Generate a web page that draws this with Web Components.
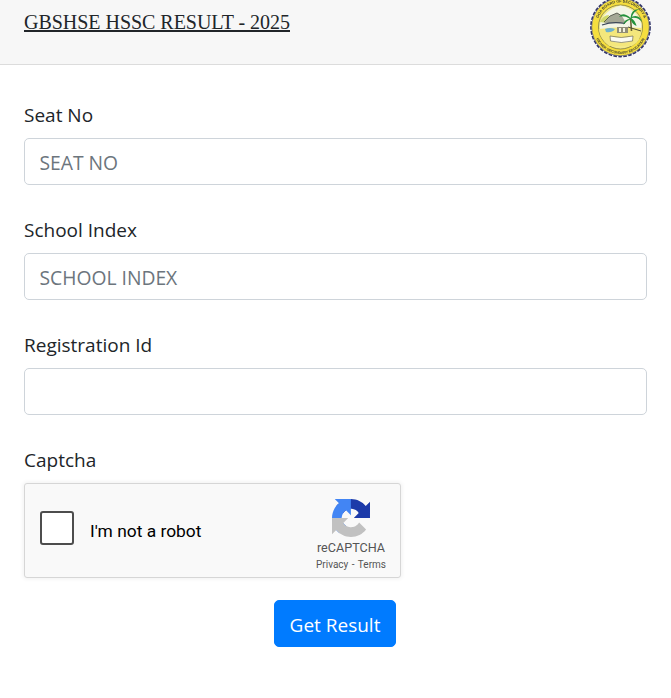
<!DOCTYPE html>
<html lang="en">
<head>
<meta charset="utf-8">
<title>GBSHSE HSSC Result</title>
<style>
    html, body { margin: 0; background: #fff; }
    body { font-family: "Open Sans", "Noto Sans", sans-serif; color: #212529; }
</style>
</head>
<body>
<result-header heading="GBSHSE HSSC RESULT - 2025"></result-header>
<result-form>
    <form-field label="Seat No" placeholder="SEAT NO"></form-field>
    <form-field label="School Index" placeholder="SCHOOL INDEX"></form-field>
    <form-field label="Registration Id"></form-field>
    <captcha-field label="Captcha"></captcha-field>
    <submit-button>Get Result</submit-button>
</result-form>

<script>
const headerHtml = `
    <style>
    :host {
        display: flex;
        justify-content: space-between;
        height: 64px;
        padding: 0 18px 0 24px;
        background-color: #f7f7f7;
        border-bottom: 1px solid #dcdcdc;
    }

    h1 {
        margin: 10px 0 0;
        font: 400 20px/24px "Liberation Serif", serif;
        letter-spacing: -.03px;
        text-decoration: underline;
        color: #212529;
    }

    svg {
        display: block;
        width: 64px;
        height: 60px;
        /* the original is a small raster, so it is a little soft */
        filter: blur(.25px);
    }
    </style>

    <h1></h1>
    <svg viewBox="0 0 64 60">
        <defs>
            <path id="arc-top" d="M 7.6 27 A 24.6 24.6 0 0 1 56.8 27"/>
            <path id="arc-bottom" d="M 4.6 27 A 27 27 0 0 0 58.6 27"/>
        </defs>
        <circle cx="31.5" cy="27" r="29.6" fill="none" stroke="#33366b" stroke-width="1.6" stroke-dasharray="3.6 1.4"/>
        <circle cx="31.5" cy="27" r="28.8" fill="#f5de3f" stroke="#3d3f6a" stroke-width=".6"/>
        <circle cx="31.5" cy="27" r="22" fill="#f4ea8a" stroke="#55553c" stroke-width=".6"/>
        <path d="M11 24 Q15 10 31.5 5.6 Q48 9 52.5 24 L52 29 L11 29 Z" fill="#f3f5e6"/>
        <path d="M11 22 Q14 15 20 15 L18 23 Z" fill="#cfd86c"/>
        <path d="M15 23 L21 16 L28 13 L33 16 L37 23 Z" fill="#a4a795"/>
        <path d="M15 22 L21 16 L28 13 L33 16" fill="none" stroke="#44463c" stroke-width=".8"/>
        <path d="M13 25 Q24 21 36 23.5" fill="none" stroke="#3a4658" stroke-width="1.2"/>
        <path d="M9.8 29 Q30 26 53 28 Q52 42 43 46 L20 46 Q11 39 9.8 29 Z" fill="#f4e77c"/>
        <path d="M16 29 Q21 27 26 29 Q23 33 17 32 Z" fill="#6fb2cc"/>
        <path d="M42.5 31 Q42 24 41.5 18" fill="none" stroke="#6a6536" stroke-width="1.6"/>
        <path transform="translate(41.5 18) scale(1.35) translate(-41.5 -18)" d="M41.5 18 Q36 13 33 17 Q37 16 41 18.5 Q37 19 36 23 Q39 20 41.5 19 Q43 23 46 24 Q45 20 42 18 Q47 17 50 21 Q48.5 15 42.5 17 Q44 13 48 11.5 Q42 11 41.5 18 Z" fill="#23913a"/>
        <path d="M28 27 h11 v6 h-11 Z" fill="#8f8d78"/>
        <path d="M30 28 h2 v4 h-2 Z M34 28 h2 v4 h-2 Z" fill="#f3f1e0"/>
        <path d="M39 27 L52 31" fill="none" stroke="#4b4a34" stroke-width="1"/>
        <path d="M21 36 Q32 39 44 36 L43.5 41 Q32 44 21.5 41 Z" fill="#fbfbf2" stroke="#55554a" stroke-width=".6"/>
        <text font-family="Liberation Sans, sans-serif" font-size="3.8" font-weight="700" fill="#3f3f2f">
            <textPath href="#arc-top" startOffset="50%" text-anchor="middle">GOA BOARD OF SECONDARY &amp;</textPath>
        </text>
        <text font-family="Liberation Sans, sans-serif" font-size="3.6" font-weight="700" fill="#3f3f2f">
            <textPath href="#arc-bottom" startOffset="50%" text-anchor="middle">HIGHER SECONDARY EDUCATION</textPath>
        </text>
    </svg>
`;

class ResultHeader extends HTMLElement {
    constructor() {
        super();

        this.attachShadow({ mode: "open" });
        this.shadowRoot.innerHTML = headerHtml;
        this.shadowRoot.querySelector("h1").textContent = this.getAttribute("heading");
    }
}

const formHtml = `
    <style>
    :host {
        display: block;
        padding: 35px 24px 0;
    }
    </style>

    <slot></slot>
`;

class ResultForm extends HTMLElement {
    constructor() {
        super();

        this.attachShadow({ mode: "open" });
        this.shadowRoot.innerHTML = formHtml;
    }
}

const fieldHtml = `
    <style>
    :host {
        display: block;
        margin-bottom: 30px;
    }

    label {
        display: block;
        margin-bottom: 8px;
        font-size: 19px;
        line-height: 30px;
    }

    input {
        display: block;
        box-sizing: border-box;
        width: 100%;
        height: 47px;
        padding: 2px 15px 0 14.5px;
        border: 1px solid #ced4da;
        border-radius: 5px;
        background: #fff;
        font: inherit;
        font-size: 19.3px;
        color: #495057;
        outline: none;
    }

    input::placeholder {
        color: #6c757d;
        opacity: 1;
    }
    </style>

    <label></label>
    <input type="text">
`;

class FormField extends HTMLElement {
    constructor() {
        super();

        this.attachShadow({ mode: "open" });
        this.shadowRoot.innerHTML = fieldHtml;
        this.shadowRoot.querySelector("label").textContent = this.getAttribute("label");
        this.shadowRoot.querySelector("input").placeholder = this.getAttribute("placeholder") || "";
    }
}

const captchaHtml = `
    <style>
    :host {
        display: block;
    }

    .title {
        margin-bottom: 8px;
        font-size: 19px;
        line-height: 30px;
    }

    .box {
        box-sizing: border-box;
        display: flex;
        align-items: center;
        width: 377px;
        height: 95px;
        padding: 0 13px 0 15px;
        border: 1px solid #d6d6d6;
        border-radius: 3px;
        background: #f9f9f9;
        box-shadow: 0 0 4px 1px rgba(0, 0, 0, .06);
        font-family: Roboto, sans-serif;
        color: #000;
    }

    .check {
        flex: none;
        box-sizing: border-box;
        width: 34px;
        height: 34px;
        margin: 0 16px 5px 0;
        border: 2.5px solid #4d4d4d;
        border-radius: 3px;
        background: #fff;
    }

    .text {
        flex: 1;
        font-size: 17.4px;
    }

    .brand {
        display: flex;
        flex-direction: column;
        align-items: center;
        width: 72px;
        margin-top: 8px;
        color: #555;
    }

    svg {
        display: block;
        width: 38px;
        height: 38px;
        margin-bottom: 3px;
    }

    .name {
        font-size: 12.6px;
        line-height: 16px;
    }

    .links {
        margin-top: 3px;
        font-size: 10px;
        line-height: 12px;
        word-spacing: 1px;
        white-space: nowrap;
    }
    </style>

    <div class="title"></div>
    <div class="box">
        <div class="check"></div>
        <div class="text">I'm not a robot</div>
        <div class="brand">
            <svg viewBox="0 0 64 64">
                <path fill="#1c3aa9" d="M64 31.955l-.033-1.37V4.687l-7.16 7.16C50.95 4.674 42.033.093 32.05.093c-10.4 0-19.622 4.96-25.458 12.64l11.736 11.86a15.55 15.55 0 0 1 4.754-5.334c2.05-1.6 4.952-2.906 8.968-2.906.485 0 .86.057 1.135.163 4.976.393 9.29 3.14 11.83 7.125l-8.307 8.307c10.522-.04 22.4-.066 27.295.005"/>
                <path fill="#4285f4" d="M31.862.094l-1.37.033H4.594l7.16 7.16C4.58 13.147 0 22.06 0 32.046c0 10.4 4.96 19.622 12.64 25.458l11.86-11.736a15.55 15.55 0 0 1-5.334-4.754c-1.6-2.05-2.906-4.952-2.906-8.968 0-.485.057-.86.163-1.135.393-4.976 3.14-9.29 7.125-11.83l8.307 8.307c-.04-10.522-.066-22.4.005-27.295"/>
                <path fill="#c1c1c1" d="M.001 32.045l.033 1.37v25.898l7.16-7.16c5.86 7.173 14.775 11.754 24.76 11.754 10.4 0 19.622-4.96 25.458-12.64l-11.736-11.86a15.55 15.55 0 0 1-4.754 5.334c-2.05 1.6-4.952 2.906-8.968 2.906-.485 0-.86-.057-1.135-.163-4.976-.393-9.29-3.14-11.83-7.125l8.307-8.307c-10.522.04-22.4.066-27.295-.005"/>
            </svg>
            <div class="name">reCAPTCHA</div>
            <div class="links">Privacy - Terms</div>
        </div>
    </div>
`;

class CaptchaField extends HTMLElement {
    constructor() {
        super();

        this.attachShadow({ mode: "open" });
        this.shadowRoot.innerHTML = captchaHtml;
        this.shadowRoot.querySelector(".title").textContent = this.getAttribute("label");
    }
}

const buttonHtml = `
    <style>
    :host {
        display: flex;
        justify-content: center;
        margin-top: 22px;
        padding-right: 1px;
    }

    button {
        box-sizing: border-box;
        width: 122px;
        height: 47px;
        padding: 2px 0 0;
        border: 1px solid #007bff;
        border-radius: 5px;
        background-color: #007bff;
        font: inherit;
        font-size: 19px;
        color: #fff;
    }
    </style>

    <button><slot></slot></button>
`;

class SubmitButton extends HTMLElement {
    constructor() {
        super();

        this.attachShadow({ mode: "open" });
        this.shadowRoot.innerHTML = buttonHtml;
    }
}

customElements.define("result-header", ResultHeader);
customElements.define("result-form", ResultForm);
customElements.define("form-field", FormField);
customElements.define("captcha-field", CaptchaField);
customElements.define("submit-button", SubmitButton);
</script>
</body>
</html>
